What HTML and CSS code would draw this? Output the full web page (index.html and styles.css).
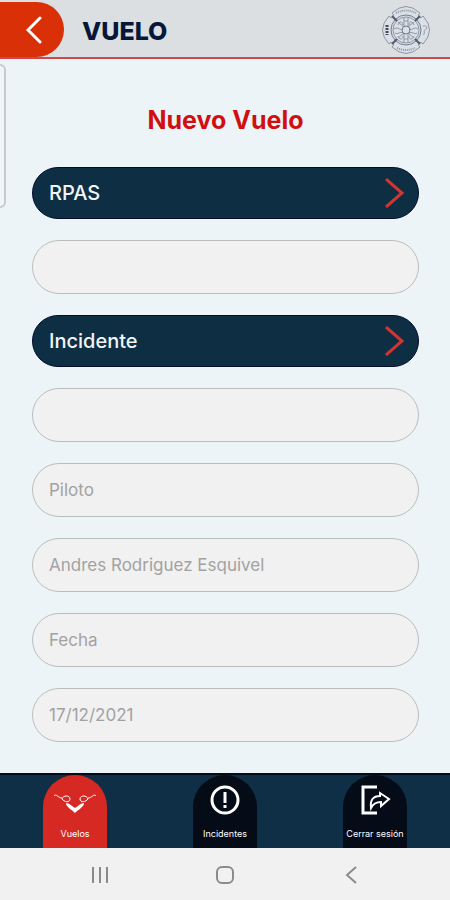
FILE: index.html
```
<!DOCTYPE html>
<html lang="es">
    <head>
        <meta charset="UTF-8" />
        <meta name="viewport" content="width=device-width, initial-scale=1.0" />
        <title>Nuevo Vuelo</title>
        <link rel="stylesheet" href="styles.css">
    </head>
    <body>
        <header class="top-bar">
            <button class="back-button" type="button" aria-label="Volver">
                <svg width="16" height="28" viewBox="0 0 16 28"><path d="M14 2 2 14l12 12" /></svg>
            </button>
            <h1 class="top-title">VUELO</h1>
            <svg class="badge" width="50" height="50" viewBox="0 0 50 50">
                <path class="badge-shape" d="M11 8Q25-5 39 8Q36 10 38 12T42 11Q55 25 42 39Q40 36 38 38T39 42Q25 55 11 42Q14 40 12 38T8 39Q-5 25 8 11Q10 14 12 12T11 8Z" />
                <circle class="badge-ring" cx="25" cy="25" r="15" />
                <circle cx="25" cy="25" r="13" />
                <path class="badge-text" d="M15 8Q25 3 35 8M16 43Q25 47 34 43" />
                <path class="badge-side" d="M6 20v10" />
                <path d="M42 21c5-1 4 3 2 4s1 5-2 4" />
                <path class="badge-ties" d="m11 11 5 5M39 11l-5 5M11 39l5-5M39 39l-5-5" />
                <path d="M23 12v10M27 12v10M23 28v10M27 28v10M23 16h4M23 34h4M17 17l6 5M33 17l-6 5M17 33l6-5M33 33l-6-5" />
                <path d="M13 24c4-3 6 2 9 0M37 24c-4-3-6 2-9 0M14 28c3 2 5-2 8 0M36 28c-3 2-5-2-8 0M17 20c1-4 5-4 5 0M33 20c-1-4-5-4-5 0M17 31c1 4 5 4 5 0M33 31c-1 4-5 4-5 0" />
                <circle class="badge-ring" cx="25" cy="25" r="4" />
            </svg>
        </header>

        <div class="edge-handle"></div>

        <main class="content">
            <h2 class="form-title">Nuevo Vuelo</h2>
            <form class="flight-form">
                <button class="picker" type="button">
                    RPAS
                    <svg width="20" height="30" viewBox="0 0 20 30"><path d="M2 1 18 15 2 29" /></svg>
                </button>
                <input class="field" type="text" aria-label="RPAS" />
                <button class="picker" type="button">
                    Incidente
                    <svg width="20" height="30" viewBox="0 0 20 30"><path d="M2 1 18 15 2 29" /></svg>
                </button>
                <input class="field" type="text" aria-label="Incidente" />
                <input class="field" type="text" aria-label="Piloto" placeholder="Piloto" />
                <input class="field" type="text" aria-label="Nombre del piloto" value="Andres Rodriguez Esquivel" />
                <input class="field" type="text" aria-label="Fecha" placeholder="Fecha" />
                <input class="field" type="text" aria-label="Fecha del vuelo" value="17/12/2021" />
            </form>
        </main>

        <nav class="tabs">
            <a class="tab active" href="#vuelos">
                <svg width="44" height="32" viewBox="0 0 44 32">
                    <path class="blade" d="M1 12c2-3 4 2 8 2M9 15c1-4 8-4 8 0s-6 3-8 0ZM43 12c-2-3-4 2-8 2M35 15c-1-4-8-4-8 0s6 3 8 0Z" />
                    <path class="drone" d="M13 19c3 0 6 3 9 5 3-2 6-5 9-5 0 4-5 6-9 10-4-4-9-6-9-10Z" />
                </svg>
                Vuelos
            </a>
            <a class="tab" href="#incidentes">
                <svg width="32" height="32" viewBox="0 0 32 32">
                    <circle cx="16" cy="16" r="13" />
                    <path class="mark" d="M16 8v11M16 21v3" />
                </svg>
                Incidentes
            </a>
            <a class="tab" href="#salir">
                <svg width="32" height="32" viewBox="0 0 32 32">
                    <path d="M18 3H4v26h14" />
                    <path class="arrow" d="M12 24C11 16 14 12 21 12V9l9 6-8 7v-4c-5 0-8 2-10 6Z" />
                </svg>
                Cerrar sesión
            </a>
        </nav>

        <footer class="system-bar">
            <button type="button" aria-label="Recientes">
                <svg width="20" height="20" viewBox="0 0 20 20"><path d="M3 2v16M10 2v16M17 2v16" /></svg>
            </button>
            <button type="button" aria-label="Inicio">
                <svg width="20" height="20" viewBox="0 0 20 20"><rect x="2" y="2" width="16" height="16" rx="5" /></svg>
            </button>
            <button type="button" aria-label="Atrás">
                <svg width="20" height="20" viewBox="0 0 20 20"><path d="m15 2-9 8 9 8" /></svg>
            </button>
        </footer>
    </body>
</html>
```

FILE: styles.css
```
* {
    box-sizing: border-box;
}

body {
    font-family: Inter, "Open Sans", sans-serif;
    display: flex;
    flex-direction: column;
    min-height: 100vh;
    margin: 0;
    background: #edf4f7;
}

button {
    border: none;
    font-family: inherit;
    cursor: pointer;
}

svg {
    display: block;
    fill: none;
    stroke: currentColor;
}

.top-bar {
    display: flex;
    align-items: center;
    height: 59px;
    padding-right: 19px;
    background: #dcdfe1;
    border-bottom: 2px solid #d0484a;
}

.back-button {
    display: flex;
    align-items: center;
    justify-content: flex-end;
    align-self: flex-end;
    width: 64px;
    height: 55px;
    padding: 0 22px;
    background: #d93007;
    color: #fff;
    border-radius: 0 28px 28px 0;
}

.back-button svg {
    flex: none;
    stroke-width: 3;
    stroke-linecap: round;
}

.top-title {
    margin: 4px auto 0 18px;
    color: #06173a;
    font-size: 25px;
    font-weight: 800;
    line-height: 32px;
}

.badge {
    margin-top: 2px;
    color: #8d97a5;
}

.badge-shape {
    fill: #dae0e6;
}

.badge-ring {
    stroke: #717d8e;
}

.badge-text {
    stroke-width: 2;
    stroke-dasharray: 1 1;
}

.badge-side {
    color: #434b5c;
    stroke-width: 3;
    stroke-dasharray: 2 1;
}

.badge-ties {
    color: #525c6e;
    stroke-width: 2;
}

/* edge panel that peeks in from the left side */
.edge-handle {
    position: absolute;
    top: 64px;
    left: 0;
    width: 6px;
    height: 144px;
    background: #f0f5f8;
    border: 2px solid #c6cbce;
    border-left: none;
    border-radius: 0 6px 6px 0;
}

.content {
    flex: 1;
    padding: 45px 31px 31px 32px;
}

.form-title {
    margin: 0 0 31px;
    color: #d01010;
    font-size: 25px;
    font-weight: 700;
    line-height: 32px;
    text-align: center;
}

.flight-form {
    display: flex;
    flex-direction: column;
    gap: 21px;
}

.picker {
    display: flex;
    align-items: center;
    justify-content: space-between;
    height: 52px;
    padding: 0 14px 0 16px;
    background: #0e2e44;
    color: #f2f4f6;
    border: 1px solid #040d2c;
    border-radius: 26px;
    font-size: 20px;
    font-weight: 500;
}

.picker svg {
    color: #d03530;
    stroke-width: 3;
}

.field {
    width: 100%;
    height: 54px;
    padding: 0 16px;
    background: #f1f1f1;
    color: #a2a2a2;
    border: 1px solid #babdbe;
    border-radius: 27px;
    font-family: inherit;
    font-size: 17px;
}

.field::placeholder {
    color: #a2a2a2;
}

.tabs {
    display: grid;
    grid-template-columns: repeat(3, 1fr);
    justify-items: center;
    height: 75px;
    background: #0e2f45;
    border-top: 2px solid #050c18;
}

.tab {
    display: flex;
    flex-direction: column;
    align-items: center;
    gap: 9px;
    width: 64px;
    padding-top: 9px;
    background: #060b18;
    color: #fff;
    border-radius: 32px 32px 0 0;
    font-size: 9px;
    line-height: 18px;
    text-decoration: none;
    white-space: nowrap;
}

.tab svg {
    stroke-width: 3;
}

.tab.active {
    background: #d62924;
}

.tab .arrow {
    stroke-width: 2;
}

.tab .blade {
    stroke-width: 1;
}

.tab .drone {
    fill: #fff;
    stroke: none;
}

.system-bar {
    display: grid;
    grid-template-columns: repeat(3, 1fr);
    height: 52px;
    padding: 2px 36px 0 37px;
    background: #f1f1f1;
}

.system-bar button {
    display: flex;
    align-items: center;
    justify-content: center;
    background: none;
    color: #8b8b8b;
}

.system-bar svg {
    stroke-width: 2;
}
```
